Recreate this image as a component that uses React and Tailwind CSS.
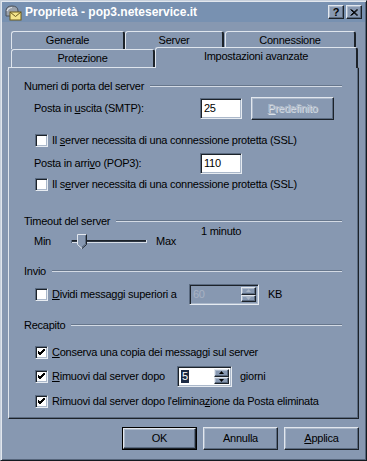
import React from "react";

const RAISED =
  "border border-t-[#e2e7ee] border-l-[#e2e7ee] border-r-[#1c2229] border-b-[#1c2229] shadow-[inset_-1px_-1px_0_#5a6a80,inset_1px_1px_0_#abb8ca]";
const SUNKEN =
  "border border-t-[#5a6a80] border-l-[#5a6a80] border-r-[#e6ebf1] border-b-[#e6ebf1] shadow-[inset_1px_1px_0_#1c2229,inset_-1px_-1px_0_#abb8ca]";

function Check({ checked }) {
  return (
    <div className={"w-[13px] h-[13px] bg-white shrink-0 flex items-center justify-center " + SUNKEN}>
      {checked && (
        <svg width="7" height="7" viewBox="0 0 7 7">
          <path d="M0 2 L2 4 L7 -1 M0 3 L2 5 L7 0 M0 4 L2 6 L7 1" stroke="#000" strokeWidth="1" fill="none" shapeRendering="crispEdges" />
        </svg>
      )}
    </div>
  );
}

function GroupHeader({ label, mt }) {
  return (
    <div className={"flex items-center h-[14px] ml-[15px] mr-[16px] " + mt}>
      <span className="whitespace-nowrap">{label}</span>
      <div className="flex-1 ml-[6px] h-[2px] border-t border-t-[#66768c] border-b border-b-[#d3dae4]" />
    </div>
  );
}

function Arrow({ up, color }) {
  return (
    <svg width="5" height="3" viewBox="0 0 5 3">
      {up ? <path d="M2.5 0 L5 3 L0 3 Z" fill={color} /> : <path d="M0 0 L5 0 L2.5 3 Z" fill={color} />}
    </svg>
  );
}

function Spinner({ w, value, disabled }) {
  const arrow = disabled ? "#aab5c5" : "#000";
  return (
    <div className={"h-[21px] flex items-stretch shrink-0 " + w + " " + SUNKEN + (disabled ? " bg-[#8798b1]" : " bg-white")}>
      <div className="flex-1 flex items-center pl-[3px]">
        {disabled ? (
          <span className="text-[#a7b2c3]">{value}</span>
        ) : (
          <span className="bg-[#1c2a44] text-white px-[1px] leading-[13px]">{value}</span>
        )}
      </div>
      <div className="w-[15px] flex flex-col my-[2px] mr-[2px]">
        <div className={"flex-1 flex items-center justify-center bg-[#8798b1] " + RAISED}>
          <Arrow up color={arrow} />
        </div>
        <div className={"flex-1 flex items-center justify-center bg-[#8798b1] " + RAISED}>
          <Arrow color={arrow} />
        </div>
      </div>
    </div>
  );
}

function Tab({ w, h, label, extra = "" }) {
  return (
    <div
      className={
        "flex items-center justify-center rounded-t-[3px] bg-[#8798b1] border-t border-l border-t-[#dfe5ed] border-l-[#dfe5ed] border-r-2 border-r-[#1c2229] " +
        w + " " + h + " " + extra
      }
    >
      {label}
    </div>
  );
}

function Button({ children, def, disabled, w = "w-[75px]" }) {
  return (
    <div className={(def ? "border border-black " : "") + "h-[23px] " + w + " flex"}>
      <div className={"flex-1 flex items-center justify-center bg-[#8798b1] " + RAISED}>
        {disabled ? <span className="text-[#b3bdcb] [text-shadow:1px_1px_0_#d9e0e8]">{children}</span> : children}
      </div>
    </div>
  );
}

export default function App() {
  return (
    <div className="w-[367px] h-[461px] bg-[#8798b1] font-['Liberation_Sans',Arial,sans-serif] text-[11px] leading-[13px] text-black border border-t-[#c7d0dc] border-l-[#c7d0dc] border-r-[#141a20] border-b-[#141a20] shadow-[inset_1px_1px_0_#e2e7ee,inset_-1px_-1px_0_#55647a] overflow-hidden">
      {/* title bar */}
      <div className="mx-[1px] mt-[1px] h-[20px] bg-[#7891b1] flex items-center pl-[2px] pr-[3px]">
        <svg width="18" height="17" viewBox="0 0 18 17" className="shrink-0">
          <path d="M2 7 Q2 2 8 2 Q14 2 14 7 L14 12 L2 12 Z" fill="#9aa1ab" stroke="#4b525c" strokeWidth="1" />
          <path d="M3 7 Q4 4 8 3.5" stroke="#e3e6ea" strokeWidth="1.2" fill="none" />
          <rect x="6" y="8" width="11" height="8" fill="#f3e48a" stroke="#6b5a1c" strokeWidth="1" />
          <path d="M6 8 L11.5 12.5 L17 8" stroke="#6b5a1c" strokeWidth="1" fill="none" />
        </svg>
        <span className="ml-[3px] text-white font-bold text-[12px] whitespace-nowrap">Proprietà - pop3.neteservice.it</span>
        <div className="ml-auto flex items-center gap-[2px]">
          <div className={"w-[16px] h-[14px] bg-[#8798b1] flex items-center justify-center font-bold text-[11px] " + RAISED}>?</div>
          <div className={"w-[16px] h-[14px] bg-[#8798b1] flex items-center justify-center " + RAISED}>
            <svg width="8" height="7" viewBox="0 0 8 7">
              <path d="M0.5 0.5 L7 6.5 M1.5 0.5 L8 6.5 M7 0.5 L0.5 6.5 M8 0.5 L1.5 6.5" stroke="#000" strokeWidth="1" />
            </svg>
          </div>
        </div>
      </div>

      {/* tab area */}
      <div className="ml-[7px] w-[351px] mt-[9px] tracking-[-0.25px]">
        <div className="flex pl-[3px] h-[18px]">
          <Tab w="w-[114px]" h="h-[18px]" label="Generale" />
          <Tab w="w-[99px]" h="h-[18px]" label="Server" />
          <Tab w="w-[131px]" h="h-[18px]" label="Connessione" extra="ml-[1px]" />
        </div>
        <div className="flex items-end pl-[3px] h-[20px] -mt-[2px] relative z-10">
          <Tab w="w-[144px]" h="h-[18px]" label="Protezione" />
          <Tab w="w-[203px]" h="h-[21px] -mb-[1px] items-start pt-[2px]" label="Impostazioni avanzate" />
        </div>

        {/* panel */}
        <div className="h-[352px] border-t border-l border-t-[#dfe5ed] border-l-[#dfe5ed] border-r border-b border-r-[#1c2229] border-b-[#1c2229] shadow-[inset_-1px_-1px_0_#5a6a80] flex flex-col">
          <GroupHeader label="Numeri di porta del server" mt="mt-[11px]" />

          <div className="flex items-center h-[21px] mt-[5px] ml-[25px]">
            <span className="w-[166px]">
              Posta in <u>u</u>scita (SMTP):
            </span>
            <div className={"w-[42px] h-[21px] bg-white flex items-center pl-[3px] " + SUNKEN}>25</div>
            <div className="ml-[9px]">
              <Button w="w-[83px]" disabled>
                <u>P</u>redefinito
              </Button>
            </div>
          </div>

          <div className="flex items-center h-[13px] mt-[15px] ml-[26px]">
            <Check />
            <span className="ml-[4px]">
              Il <u>s</u>erver necessita di una connessione protetta (SSL)
            </span>
          </div>

          <div className="flex items-center h-[21px] mt-[6px] ml-[25px]">
            <span className="w-[166px]">
              Posta in arri<u>v</u>o (POP3):
            </span>
            <div className={"w-[42px] h-[21px] bg-white flex items-center pl-[3px] " + SUNKEN}>110</div>
          </div>

          <div className="flex items-center h-[13px] mt-[4px] ml-[26px]">
            <Check />
            <span className="ml-[4px]">
              Il s<u>e</u>rver necessita di una connessione protetta (SSL)
            </span>
          </div>

          <GroupHeader label="Timeout del server" mt="mt-[23px]" />

          <div className="flex items-start -mt-[3px] ml-[25px] h-[24px]">
            <div className="flex items-center h-[16px] mt-[8px]">
              <span className="w-[34px]">Min</span>
              <svg width="82" height="16" viewBox="0 0 82 16" className="shrink-0">
                <rect x="4" y="7" width="74" height="1" fill="#1c2229" />
                <rect x="4" y="8" width="74" height="1" fill="#2e3744" />
                <rect x="4" y="9" width="74" height="1" fill="#d7dee7" />
                <rect x="3" y="7" width="1" height="3" fill="#5a6a80" />
                <rect x="78" y="7" width="1" height="3" fill="#d7dee7" />
                <path d="M9.5 1.5 L18.5 1.5 L18.5 11.5 L14 15.5 L9.5 11.5 Z" fill="#8798b1" />
                <path d="M9.5 11.5 L9.5 1.5 L18.5 1.5" stroke="#e2e7ee" strokeWidth="1" fill="none" />
                <path d="M18.5 1.5 L18.5 11.5 L14 15.5" stroke="#1c2229" strokeWidth="1" fill="none" />
                <path d="M9.5 11.5 L14 15.5" stroke="#e2e7ee" strokeWidth="1" fill="none" />
                <path d="M17.5 2.5 L17.5 11 L14 14" stroke="#5a6a80" strokeWidth="1" fill="none" />
              </svg>
              <span className="ml-[6px] w-[45px]">Max</span>
            </div>
            <span className="whitespace-nowrap">1 minuto</span>
          </div>

          <GroupHeader label="Invio" mt="mt-[15px]" />

          <div className="flex items-center h-[21px] mt-[6px] ml-[26px]">
            <Check />
            <span className="ml-[4px] w-[137px]">
              <u>D</u>ividi messaggi superiori a
            </span>
            <Spinner w="w-[70px]" value="60" disabled />
            <span className="ml-[9px]">KB</span>
          </div>

          <GroupHeader label="Recapito" mt="mt-[13px]" />

          <div className="flex items-center h-[13px] mt-[14px] ml-[26px]">
            <Check checked />
            <span className="ml-[4px]">
              <u>C</u>onserva una copia dei messaggi sul server
            </span>
          </div>

          <div className="flex items-center h-[21px] mt-[7px] ml-[26px]">
            <Check checked />
            <span className="ml-[4px] w-[125px]">
              <u>R</u>imuovi dal server dopo
            </span>
            <Spinner w="w-[55px]" value="5" />
            <span className="ml-[8px]">giorni</span>
          </div>

          <div className="flex items-center h-[13px] mt-[8px] ml-[26px]">
            <Check checked />
            <span className="ml-[4px]">
              Rimuovi dal server dopo l'elimina<u>z</u>ione da Posta eliminata
            </span>
          </div>
        </div>

        {/* buttons */}
        <div className="flex justify-end gap-[6px] mt-[8px]">
          <Button def>OK</Button>
          <Button>Annulla</Button>
          <Button>
            <u>A</u>pplica
          </Button>
        </div>
      </div>
    </div>
  );
}
